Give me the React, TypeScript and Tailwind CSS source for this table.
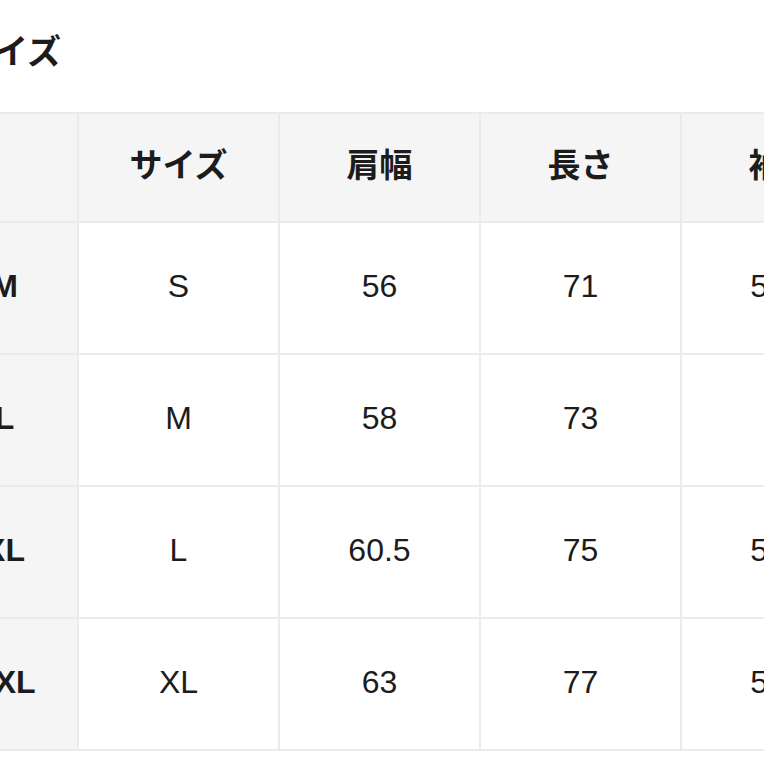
const headers = ["", "サイズ", "肩幅", "長さ", "袖丈"];

const rows = [
  ["M", "S", "56", "71", "56.5"],
  ["L", "M", "58", "73", "58"],
  ["XL", "L", "60.5", "75", "58.5"],
  ["XXL", "XL", "63", "77", "59.5"],
];

export default function App() {
  return (
    <div
      className="w-[764px] h-[764px] overflow-hidden bg-white text-[#1c1c1c]"
      style={{ fontFamily: '"Liberation Sans", "Noto Sans CJK JP", sans-serif' }}
    >
      {/* Title */}
      <div className="h-[112px] pt-[28px] -ml-[40px]">
        <h2 className="text-[34px] leading-[48px] font-bold">サイズ</h2>
      </div>

      {/* Size table */}
      <table className="table-fixed border-collapse -ml-[70px] w-[951px] text-[32px]">
        <colgroup>
          <col className="w-[147px]" />
          <col className="w-[201px]" />
          <col className="w-[201px]" />
          <col className="w-[201px]" />
          <col className="w-[201px]" />
        </colgroup>
        <thead>
          <tr className="h-[109px] bg-[#f5f5f5]">
            {headers.map((h, i) => (
              <th
                key={i}
                className="border-2 border-[#ebebeb] font-bold text-[33px] text-center align-middle pb-[4px]"
              >
                {h}
              </th>
            ))}
          </tr>
        </thead>
        <tbody>
          {rows.map((row, r) => (
            <tr key={r} className="h-[132px]">
              {row.map((cell, c) =>
                c === 0 ? (
                  <th
                    key={c}
                    className="border-2 border-[#ebebeb] bg-[#f5f5f5] font-bold text-center align-middle pb-[4px]"
                  >
                    {cell}
                  </th>
                ) : (
                  <td
                    key={c}
                    className="border-2 border-[#ebebeb] text-center align-middle pb-[4px]"
                  >
                    {cell}
                  </td>
                )
              )}
            </tr>
          ))}
        </tbody>
      </table>
    </div>
  );
}
